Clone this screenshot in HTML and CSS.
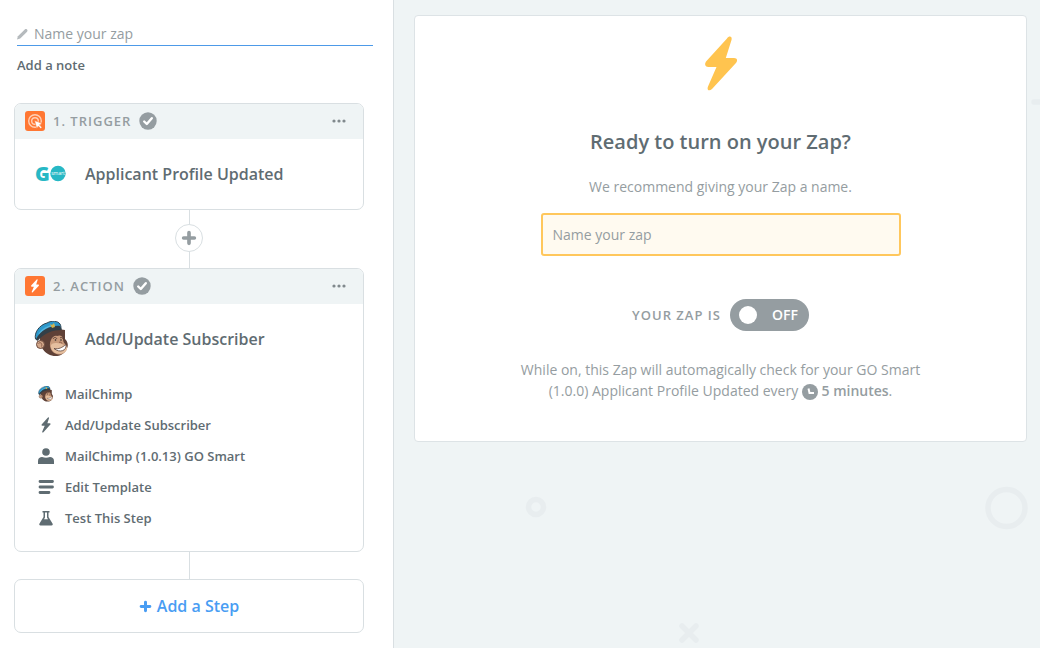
FILE: index.html
```html
<!DOCTYPE html>
<html lang="en">
<head>
  <meta charset="UTF-8">
  <meta name="viewport" content="width=device-width, initial-scale=1.0">
  <title>Zap Editor</title>
  <link rel="stylesheet" href="styles.css">
</head>
<body>
  <!-- shared icons -->
  <svg class="sprite" aria-hidden="true">
    <symbol id="bolt" viewBox="0 0 32 56">
      <path d="M22 2.500C24-.5 27.500 0 26.500 4L20.800 22H29c3.500 0 4 3 1.500 5.500L7 53c-2.500 2.500-5.500 1.500-4-2.500L11.500 31H3.500C0 31-1 28 1.500 25z"/>
    </symbol>
    <symbol id="check" viewBox="0 0 18 18">
      <circle cx="9" cy="9" r="8.700" fill="#959da1"/>
      <path d="M5.200 9.500l2.600 2.500 5-5.800" fill="none" stroke="#fff" stroke-width="2.400" stroke-linecap="round" stroke-linejoin="round"/>
    </symbol>
    <symbol id="plus" viewBox="0 0 14 14">
      <path d="M7 2.300v9.400M2.300 7h9.400" fill="none" stroke="currentColor" stroke-width="3.200" stroke-linecap="round"/>
    </symbol>
    <symbol id="chimp" viewBox="0 0 36 36">
      <path d="M6 15c-1 8 2 14 8 18 7 4 15 2 18-4 3-4 2-8-1-11V9L17 7z" fill="#5f4137"/>
      <path d="M17 19c1-3 4-5 6-4 2-1 5-1 6 2 0 2 0 4 2 6 3 2 2 6 0 8-4 4-10 3-13-1-2-3-3-7-1-11z" fill="#c89a7b"/>
      <path d="M18 23c3-2 9-1 12 1 4 1 4 5 1 7-4 3-10 2-12-1-2-2-3-6-1-7z" fill="#e5bf9f"/>
      <circle cx="6.500" cy="23.500" r="4" fill="#d2a78a" stroke="#6b4a3e"/>
      <path d="M4.500 22.500c2-2 4 0 3 3" fill="none" stroke="#8b5d4a"/>
      <path d="M20 27.500c5 1 8-1 12-4 1 6-6 9-12 4z" fill="#fff" stroke="#5b4038" stroke-width=".8"/>
      <path d="M19 18c1-2 3-2 4 0M26 17c1-1 3-1 3 1" fill="none" stroke="#49332d" stroke-width=".8"/>
      <circle cx="21.500" cy="19" r=".8" fill="#2c2929"/>
      <circle cx="27" cy="19" r=".8" fill="#2c2929"/>
      <path d="M25 21.500c1-1 3 0 3 1" fill="none" stroke="#8b5d4a"/>
      <path d="M1.500 18C0 12 5 4 13 2c5-3 11-2 13 1 1 2 1 3 1 5-10-2-18 2-24 11z" fill="#2d98cb" stroke="#30434f"/>
      <path d="M5 13C9 7 15 5 21 4" fill="none" stroke="#55b4dc" stroke-width="1.500"/>
      <path d="M2 18C7 9 17 4 26 5l2 4C19 9 10 12 3.500 20z" fill="#333f47"/>
      <path d="M16 3l2 1 2-2 1 4-3 1z" fill="#d4b34a"/>
    </symbol>
  </svg>

  <div class="app">
    <aside class="sidebar">
      <header class="zap-header">
        <div class="zap-name">
          <svg class="pencil" viewBox="0 0 12 12" aria-hidden="true"><path d="M0 12l1-3.500L8.500 1c1.500-1.500 4 .5 2.500 2.500L3.500 11z" fill="#b5babd"/></svg>
          <input type="text" aria-label="Zap name" placeholder="Name your zap">
        </div>
        <button class="note-button">Add a note</button>
      </header>

      <section class="step">
        <div class="step-header">
          <svg class="badge" viewBox="0 0 20 20" aria-hidden="true">
            <rect width="20" height="20" rx="3" fill="#ff7733"/>
            <circle cx="10" cy="10" r="6.300" fill="none" stroke="#ffd0b6" stroke-width="1.400"/>
            <circle cx="10" cy="10" r="3.300" fill="none" stroke="#ffd0b6" stroke-width="1.400"/>
            <path d="M9.500 9.500l7.500 2.800-2.500 1.500 2.500 2.600-1.300 1.200-2.400-2.500-1.600 2.300z" fill="#fff" stroke="#ff7733" stroke-width=".6"/>
          </svg>
          <span class="step-label">1. Trigger</span>
          <svg class="check" aria-hidden="true"><use href="#check"/></svg>
          <button class="menu-button" aria-label="Trigger options"><svg viewBox="0 0 14 4"><g fill="#81898d"><circle cx="2" cy="2" r="1.600"/><circle cx="7" cy="2" r="1.600"/><circle cx="12" cy="2" r="1.600"/></g></svg></button>
        </div>
        <div class="step-title">
          <svg class="app-icon" viewBox="0 0 36 36" role="img" aria-label="GO Smart">
            <text class="logo-g" x="1" y="25">G</text>
            <circle cx="24" cy="17.500" r="7.700" fill="#27b8c5"/>
            <text class="logo-smart" x="24" y="19">smart</text>
          </svg>
          <h2>Applicant Profile Updated</h2>
        </div>
      </section>

      <div class="connector connector-tall">
        <button class="insert-button" aria-label="Insert a step"><svg aria-hidden="true"><use href="#plus"/></svg></button>
      </div>

      <section class="step">
        <div class="step-header">
          <svg class="badge" viewBox="0 0 20 20" aria-hidden="true">
            <rect width="20" height="20" rx="3" fill="#ff7733"/>
            <use href="#bolt" x="5" y="3" width="10" height="14" fill="#fff"/>
          </svg>
          <span class="step-label">2. Action</span>
          <svg class="check" aria-hidden="true"><use href="#check"/></svg>
          <button class="menu-button" aria-label="Action options"><svg viewBox="0 0 14 4"><g fill="#81898d"><circle cx="2" cy="2" r="1.600"/><circle cx="7" cy="2" r="1.600"/><circle cx="12" cy="2" r="1.600"/></g></svg></button>
        </div>
        <div class="step-title">
          <svg class="app-icon" aria-hidden="true"><use href="#chimp"/></svg>
          <h2>Add/Update Subscriber</h2>
        </div>
        <ul class="step-list">
          <li><a href="#"><svg aria-hidden="true"><use href="#chimp"/></svg>MailChimp</a></li>
          <li><a href="#"><svg aria-hidden="true"><use href="#bolt"/></svg>Add/Update Subscriber</a></li>
          <li><a href="#"><svg viewBox="0 0 16 16" aria-hidden="true"><circle cx="8" cy="4" r="3.800"/><path d="M0 16v-3c0-3 2-4 4-4 3 1 5 1 8 0 2 0 4 1 4 4v3z"/></svg>MailChimp (1.0.13) GO Smart</a></li>
          <li><a href="#"><svg viewBox="0 0 16 16" aria-hidden="true"><path d="M2 2.500h12.500M2 8h12.500M2 13.500h9" stroke="#5f6c72" stroke-width="2.800" stroke-linecap="round"/></svg>Edit Template</a></li>
          <li><a href="#"><svg viewBox="0 0 16 16" aria-hidden="true"><path d="M4.500 1h7v1.500h-1V7l4 6.500c.6 1 0 2-1 2h-11c-1 0-1.600-1-1-2l4-6.500V2.500h-1z"/><path d="M7 2.500h2v5l1 1.800H6l1-1.800z" fill="#fff"/></svg>Test This Step</a></li>
        </ul>
      </section>

      <div class="connector"></div>
      <button class="add-step"><svg aria-hidden="true"><use href="#plus"/></svg>Add a Step</button>
    </aside>

    <main class="main">
      <svg class="backdrop" aria-hidden="true">
        <g fill="none" stroke="#e8edef" stroke-width="5.500" stroke-linecap="round">
          <circle cx="142" cy="507" r="7.500"/>
          <circle cx="612.500" cy="508" r="18.500"/>
          <path d="M288 626l14 14M302 626l-14 14M640 102h20"/>
        </g>
      </svg>
      <section class="panel">
        <svg class="big-bolt" aria-hidden="true"><use href="#bolt"/></svg>
        <h1>Ready to turn on your Zap?</h1>
        <label class="hint" for="zapName">We recommend giving your Zap a name.</label>
        <input type="text" id="zapName" class="name-input" placeholder="Name your zap">
        <div class="switch-row">
          <label class="switch-label" for="zapSwitch">Your Zap is</label>
          <span class="switch">
            <input type="checkbox" id="zapSwitch">
            <span class="switch-state">OFF</span>
          </span>
        </div>
        <p class="description">While on, this Zap will automagically check for your GO Smart (1.0.0) Applicant Profile Updated every <svg class="clock" viewBox="0 0 16 16" aria-hidden="true"><circle cx="8" cy="8" r="8" fill="#959da1"/><path d="M6.500 4.500L7.500 9H12" fill="none" stroke="#fff" stroke-width="2"/></svg> <strong>5 minutes</strong>.</p>
      </section>
    </main>
  </div>
</body>
</html>
```
FILE: styles.css
```css
* {
  box-sizing: border-box;
}

body {
  margin: 0;
  font-family: 'Open Sans', 'Noto Sans', sans-serif;
  font-size: 14px;
  color: #5f6c72;
  background: #eff4f5;
}

button, input {
  font-family: inherit;
  color: inherit;
}

button {
  padding: 0;
  border: none;
  background: none;
  cursor: pointer;
}

input::placeholder {
  color: #959da1;
  opacity: 1;
}

h1, h2, p, ul {
  margin: 0;
  padding: 0;
}

.sprite {
  display: none;
}

.app {
  display: flex;
  min-height: 100vh;
}

/* Sidebar */
.sidebar {
  flex: 0 0 394px;
  padding: 23px 29px 15px 14px;
  background: #fff;
  border-right: 1px solid #d9dfe2;
}

.zap-header {
  margin: 0 -9px 29px 3px;
}

.zap-name {
  display: flex;
  align-items: center;
  gap: 6px;
  padding-bottom: 1px;
  border-bottom: 1px solid #4d9ae8;
}

.zap-name input {
  flex: 1;
  height: 21px;
  padding: 0;
  border: none;
  outline: none;
  font-size: 14px;
}

.pencil {
  width: 11px;
  height: 12px;
}

.note-button {
  display: block;
  margin-top: 10px;
  font-size: 13px;
  font-weight: 600;
  line-height: 18px;
}

.step {
  border: 1px solid #d9dfe2;
  border-radius: 7px;
  overflow: hidden;
}

.step-header {
  display: flex;
  align-items: center;
  height: 35px;
  padding: 0 17px 1px 10px;
  background: #eff4f5;
}

.badge {
  width: 20px;
  height: 20px;
  margin-right: 8px;
}

.step-label, .switch-label {
  font-size: 13px;
  font-weight: 600;
  letter-spacing: 1px;
  text-transform: uppercase;
  color: #959da1;
}

.check {
  width: 18px;
  height: 18px;
  margin-left: 8px;
}

.menu-button {
  display: flex;
  margin-left: auto;
}

.menu-button svg {
  width: 14px;
  height: 4px;
}

.step-title {
  display: flex;
  align-items: center;
  gap: 15px;
  height: 70px;
  padding: 0 19px;
}

.app-icon {
  width: 36px;
  height: 36px;
}

.logo-g {
  font-size: 20px;
  font-weight: 800;
  fill: #27b8c5;
}

.logo-smart {
  font-size: 5px;
  text-anchor: middle;
  fill: #fff;
}

h2 {
  font-size: 16px;
  font-weight: 600;
}

.step-list {
  padding: 4px 0 18px 23px;
  list-style: none;
}

.step-list a {
  display: flex;
  align-items: center;
  gap: 11px;
  height: 31px;
  font-size: 13px;
  font-weight: 600;
  color: inherit;
  text-decoration: none;
}

.step-list svg {
  width: 16px;
  height: 16px;
  fill: #5f6c72;
}

.connector {
  display: flex;
  align-items: center;
  justify-content: center;
  height: 27px;
  background: linear-gradient(#d9dfe2, #d9dfe2) center / 1px 100% no-repeat;
}

.connector-tall {
  height: 58px;
  padding-bottom: 2px;
}

.insert-button {
  display: flex;
  align-items: center;
  justify-content: center;
  width: 28px;
  height: 28px;
  border: 1px solid #d9dfe2;
  border-radius: 50%;
  background: #fff;
  color: #959da1;
}

.insert-button svg {
  width: 16px;
  height: 16px;
}

.add-step {
  display: flex;
  align-items: center;
  justify-content: center;
  gap: 5px;
  width: 100%;
  height: 54px;
  border: 1px solid #d9dfe2;
  border-radius: 7px;
  font-size: 16px;
  font-weight: 600;
  color: #499df3;
}

.add-step svg {
  width: 13px;
  height: 13px;
}

/* Main panel */
.main {
  position: relative;
  flex: 1;
  padding: 15px 13px 15px 20px;
}

.backdrop {
  position: absolute;
  top: 0;
  left: 0;
  width: 100%;
  height: 100%;
}

.panel {
  position: relative;
  display: flex;
  flex-direction: column;
  align-items: center;
  padding: 20px 20px 40px;
  border: 1px solid #dde3e6;
  border-radius: 4px;
  background: #fff;
  text-align: center;
}

.big-bolt {
  width: 32px;
  height: 56px;
  fill: #ffc44f;
}

h1 {
  margin-top: 36px;
  font-size: 20px;
  font-weight: 600;
  line-height: 28px;
}

.hint {
  margin-top: 20px;
  line-height: 21px;
  color: #959da1;
}

.name-input {
  width: 100%;
  max-width: 360px;
  height: 43px;
  margin-top: 16px;
  padding: 0 10px;
  border: 2px solid #ffc75c;
  border-radius: 3px;
  background: #fffaf0;
  font-size: 14px;
}

.switch-row {
  display: flex;
  align-items: center;
  gap: 9px;
  margin-top: 43px;
}

.switch {
  position: relative;
  display: flex;
}

.switch input {
  display: flex;
  align-items: center;
  width: 79px;
  height: 32px;
  margin: 0;
  padding: 0 9px;
  appearance: none;
  border-radius: 16px;
  background: #959da1;
  cursor: pointer;
}

.switch input::before {
  content: '';
  width: 18px;
  height: 18px;
  border-radius: 50%;
  background: #fff;
}

.switch-state {
  position: absolute;
  top: 0;
  right: 11px;
  font-weight: 600;
  line-height: 32px;
  color: #fff;
  pointer-events: none;
}

.description {
  max-width: 420px;
  margin-top: 28px;
  line-height: 21px;
  color: #959da1;
}

.description strong {
  font-weight: 600;
}

.clock {
  width: 16px;
  height: 16px;
  vertical-align: -4px;
}

@media (max-width: 760px) {
  .app {
    flex-direction: column;
  }

  .sidebar {
    flex: none;
  }
}
```
